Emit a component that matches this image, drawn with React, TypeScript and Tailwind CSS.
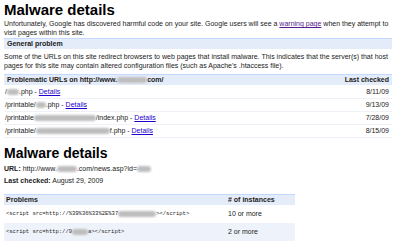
import React from "react";

function Blur({ w }: { w: number }) {
  return (
    <span
      className="inline-block h-[6px] rounded-sm bg-[#bdbdbd] align-middle blur-[1.2px]"
      style={{ width: w }}
    />
  );
}

function Details() {
  return <a className="text-[#2200cc] underline">Details</a>;
}

const urls = [
  { path: <>/<Blur w={12} />.php</>, date: "8/11/09" },
  { path: <>/printable/<Blur w={10} />.php</>, date: "9/13/09" },
  { path: <>/printable<Blur w={62} />/index.php</>, date: "7/28/09" },
  { path: <>/printable/<Blur w={74} />f.php</>, date: "8/15/09" },
];

export default function App() {
  return (
    <div className="h-[247px] w-[400px] overflow-hidden bg-white px-[4px] font-['Liberation_Sans',Arial,sans-serif] text-[7px] leading-[9px] text-[#222]">
      <h1 className="pt-[1px] text-[15px] font-bold leading-[18px] text-black">Malware details</h1>
      <p className="-mr-[4px] whitespace-nowrap">
        Unfortunately, Google has discovered harmful code on your site. Google users will see a{" "}
        <a className="text-[#551a8b] underline">warning page</a> when they attempt to
        <br />
        visit pages within this site.
      </p>

      <div className="mr-[4px] mt-[1px] border-t border-[#c3d9ff] bg-[#e5ecf9] px-[3px] font-bold leading-[10px]">
        General problem
      </div>
      <p className="mt-[3px] pr-[8px]">
        Some of the URLs on this site redirect browsers to web pages that install malware. This indicates that the server(s) that host pages for this site may contain altered configuration files (such as Apache's .htaccess file).
      </p>

      <table className="mt-[4px] w-[388px] border-collapse">
        <thead>
          <tr className="border-t border-[#c3d9ff] bg-[#e5ecf9] font-bold leading-[10px]">
            <td className="px-[3px] py-0">
              Problematic URLs on http://www.<Blur w={30} />com/
            </td>
            <td className="px-[3px] py-0 text-right">Last checked</td>
          </tr>
        </thead>
        <tbody>
          {urls.map((u) => (
            <tr key={u.date} className="h-[13px] border-b border-[#eef1f7]">
              <td className="px-[1px] py-0">
                {u.path} - <Details />
              </td>
              <td className="px-[3px] py-0 text-right">{u.date}</td>
            </tr>
          ))}
        </tbody>
      </table>

      <h2 className="mt-[7px] text-[14px] font-bold leading-[17px] text-black">Malware details</h2>
      <p className="mt-[2px]">
        <b>URL:</b> http://www.<Blur w={20} />.com/news.asp?id=<Blur w={14} />
      </p>
      <p className="mt-[3px]">
        <b>Last checked:</b> August 29, 2009
      </p>

      <table className="mt-[9px] w-[291px] border-collapse">
        <thead>
          <tr className="border-t border-[#c3d9ff] bg-[#e5ecf9] font-bold leading-[10px]">
            <td className="w-[222px] px-[2px] py-0">Problems</td>
            <td className="px-[2px] py-0"># of instances</td>
          </tr>
        </thead>
        <tbody>
          <tr className="h-[18px]">
            <td className="px-[2px] py-0 font-['Liberation_Mono',monospace] text-[5.5px]">
              &lt;script src=http://%39%36%33%2E%37<Blur w={38} />&gt;&lt;/script&gt;
            </td>
            <td className="px-[2px] py-0">10 or more</td>
          </tr>
          <tr className="h-[18px] bg-[#eef2fa]">
            <td className="px-[2px] py-0 font-['Liberation_Mono',monospace] text-[5.5px]">
              &lt;script src=http://9<Blur w={16} />a&gt;&lt;/script&gt;
            </td>
            <td className="px-[2px] py-0">2 or more</td>
          </tr>
        </tbody>
      </table>
    </div>
  );
}
